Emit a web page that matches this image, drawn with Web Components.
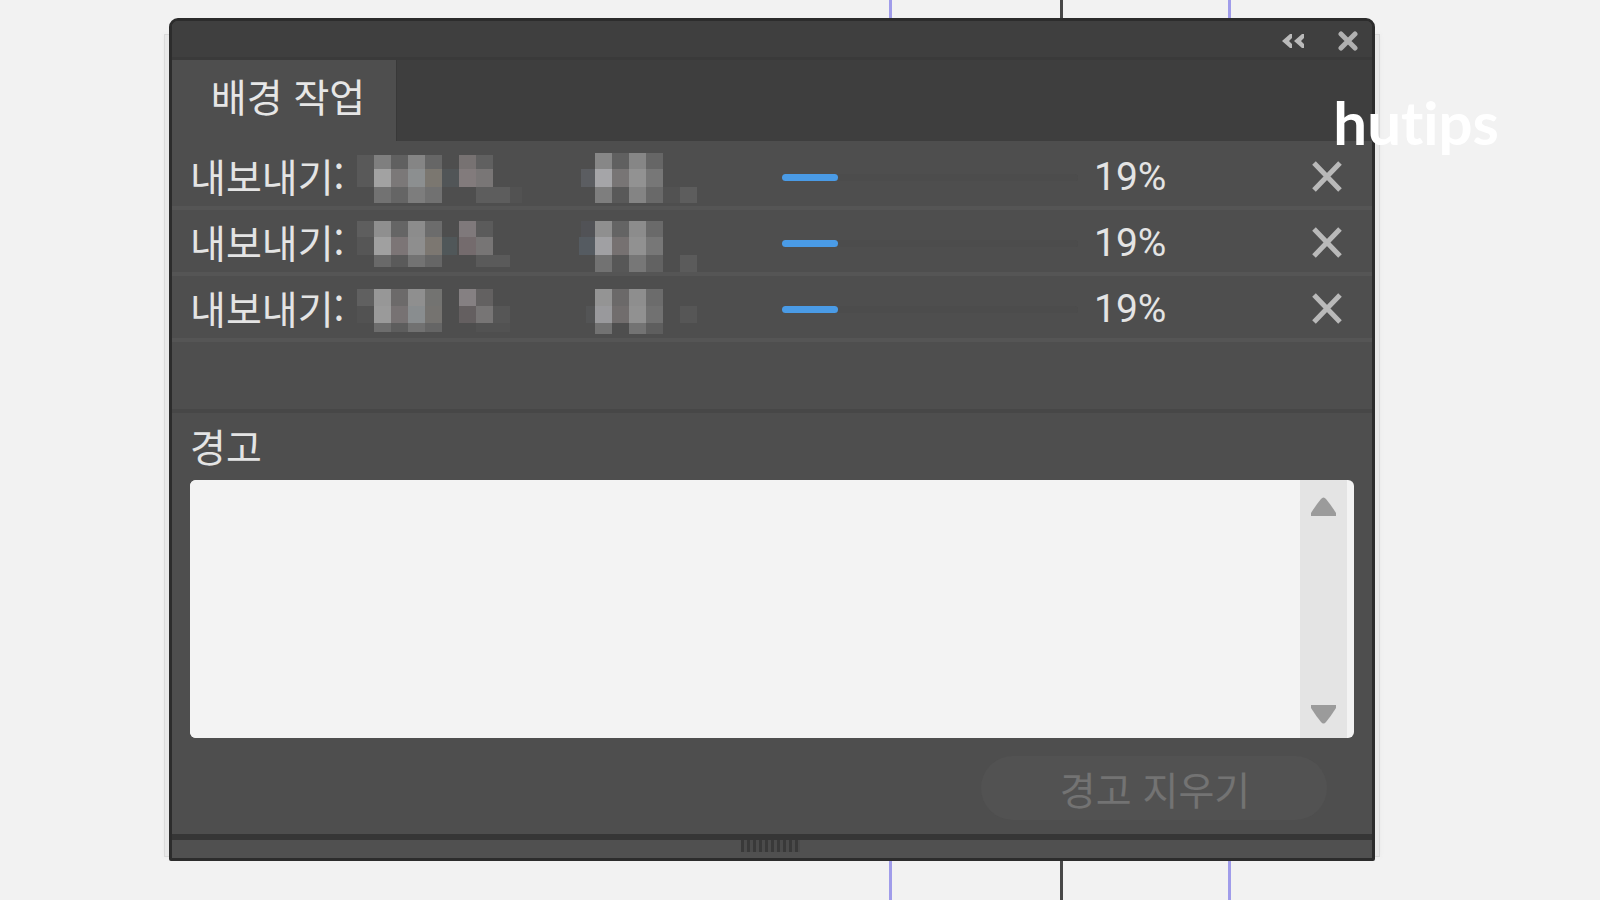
<!DOCTYPE html>
<html lang="ko">
<head>
<meta charset="utf-8">
<title>배경 작업</title>
<style>
  html, body { margin: 0; }
  body {
    background: #f2f2f2;
    font-family: "Noto Sans CJK KR", "Noto Sans", sans-serif;
    font-size: 39px;
    line-height: 56px;
    color: #e4e4e4;
  }
</style>
</head>
<body>
<canvas-page>
  <guide-lines slot="backdrop"></guide-lines>
  <task-panel>
    <span slot="tab">배경 작업</span>
    <task-row slot="tasks" value="19" mosaic="0">내보내기:</task-row>
    <task-row slot="tasks" value="19" mosaic="1">내보내기:</task-row>
    <task-row slot="tasks" value="19" mosaic="2">내보내기:</task-row>
    <warning-log slot="log">경고</warning-log>
    <pill-button slot="actions">경고 지우기</pill-button>
  </task-panel>
  <brand-mark slot="brand">hutips</brand-mark>
</canvas-page>
<script>
const define = (name, html, setup) => {
  customElements.define(name, class extends HTMLElement {
    constructor() {
      super();
      this.attachShadow({ mode: 'open' }).innerHTML = html;
    }
    connectedCallback() { if (setup) setup(this, this.shadowRoot); }
  });
};

define('canvas-page', `
  <style>
    :host { display: flex; position: relative; box-sizing: border-box; min-height: 100vh; padding: 18px 225px 39px 169px; overflow: hidden; }
    ::slotted(task-panel) { flex: 1; min-width: 0; }
  </style>
  <slot name="backdrop"></slot><slot></slot><slot name="brand"></slot>`);

define('guide-lines', `
  <style>
    :host { display: grid; position: absolute; inset: 0; grid-template-columns: 889fr 3px 168fr 3px 165fr 3px 369fr; }
    i:nth-of-type(1) { grid-column: 2; }
    i:nth-of-type(2) { grid-column: 4; }
    i:nth-of-type(3) { grid-column: 6; }
    i { background: #a09cea; }
    .axis { background: #484848; }
  </style>
  <i></i><i class="axis"></i><i></i>`);

define('brand-mark', `
  <style>
    :host { display: block; position: absolute; top: 86px; right: 101px; font: 700 60px/72px Lato, sans-serif; font-variant-ligatures: none; color: #fff; }
  </style>
  <slot></slot>`);

define('task-panel', `
  <style>
    :host { display: flex; position: relative; z-index: 0; }
    :host::before { content: ""; position: absolute; z-index: -1; inset: 16px -5px 4px; background: #e8e8e8; border: 1px solid #dadada; box-shadow: 0 0 4px #eaeaea; }
    section { flex: 1; display: flex; flex-direction: column; min-width: 0; box-sizing: border-box; border: 3px solid #2c2c2c; border-radius: 9px 9px 2px 2px; background: #4e4e4e; overflow: hidden; }
    header { display: flex; align-items: center; justify-content: flex-end; gap: 32px; box-sizing: border-box; height: 39px; padding: 4px 14px 0 0; background: #3f3f3f; border-bottom: 3px solid #3a3a3a; }
    button { display: block; padding: 0; border: 0; background: none; }
    svg { display: block; }
    nav { display: flex; background: #3e3e3e; height: 81px; }
    nav button { box-sizing: border-box; width: 225px; padding: 0 0 12px 8px; font: inherit; color: #e6e6e6; background: #4e4e4e; border-right: 1px solid #383838; }
    .tasks { padding: 3px 0 67px; border-bottom: 4px solid #474747; }
    .log { flex: 1; display: flex; padding: 0 18px; }
    ::slotted(warning-log) { flex: 1; min-width: 0; }
    .actions { display: flex; justify-content: flex-end; padding: 18px 45px 14px; }
    footer { display: flex; justify-content: center; height: 18px; padding-right: 4px; border-top: 6px solid #363636; background: #505050; }
    .grip { width: 59px; height: 12px; background: repeating-linear-gradient(90deg, #393939 0 3px, #4b4b4b 3px 6px); }
  </style>
  <section>
    <header>
      <button aria-label="접기"><svg width="24" height="18" viewBox="0 0 24 18"><path d="M10 2v4L7 9l3 3v4h-2L0 9l8-7zM22 2v4l-3 3 3 3v4h-2L12 9l8-7z" fill="#bababa"/></svg></button>
      <button aria-label="닫기"><svg width="20" height="20" viewBox="0 0 20 20"><path d="M3 3l14 14M17 3L3 17" stroke="#b0b0b0" stroke-width="5" stroke-linecap="round"/></svg></button>
    </header>
    <nav><button><slot name="tab"></slot></button></nav>
    <div class="tasks"><slot name="tasks"></slot></div>
    <div class="log"><slot name="log"></slot></div>
    <div class="actions"><slot name="actions"></slot></div>
    <footer><div class="grip"></div></footer>
  </section>`);

/* Pixelated file names: [x, y, width, height, colour] inside a 370x62 strip. */
const mosaics = [
  [[17,11,17,32,'#595959'],[34,11,17,14,'#7f7f7f'],[34,25,17,18,'#a2a2a2'],[34,43,17,16,'#727272'],[51,11,17,14,'#606060'],[51,25,17,18,'#7b7878'],[51,43,17,16,'#656565'],[68,11,17,14,'#858585'],[68,25,17,18,'#8c8f90'],[68,43,17,16,'#7d7d7d'],[85,11,17,14,'#666'],[85,25,17,18,'#7b7770'],[85,43,17,16,'#717171'],[102,25,17,18,'#515557'],
   [119,11,17,14,'#777272'],[119,25,17,18,'#827b7c'],[136,11,17,14,'#606060'],[136,25,17,18,'#797676'],[136,43,34,16,'#5d5d5d'],[170,43,12,16,'#525252'],
   [241,25,14,18,'#5b5d61'],[255,9,17,16,'#878787'],[255,25,17,18,'#a5a5a8'],[255,43,17,16,'#7e7e7e'],[272,9,17,16,'#606060'],[272,25,17,18,'#787575'],[272,43,17,16,'#595959'],[289,9,17,16,'#868686'],[289,25,17,18,'#929292'],[289,43,17,16,'#848484'],[306,9,17,16,'#666'],[306,25,17,18,'#777'],[306,43,17,16,'#696969'],[323,43,17,16,'#525252'],[340,43,17,16,'#5d5d5d']],
  [[17,11,17,16,'#5e5e5e'],[17,27,17,18,'#565656'],[34,11,17,16,'#8f8f8f'],[34,27,17,18,'#a0a0a0'],[34,45,17,12,'#696969'],[51,11,17,16,'#656565'],[51,27,17,18,'#7c7576'],[51,45,17,12,'#5a5a5a'],[68,11,17,16,'#8c8c8c'],[68,27,17,18,'#8e8e8e'],[68,45,17,12,'#737373'],[85,11,17,16,'#6c6c6c'],[85,27,17,18,'#7c7771'],[85,45,17,12,'#666'],[102,27,15,18,'#505759'],
   [119,11,17,16,'#7f797b'],[119,27,17,18,'#746b6d'],[136,11,17,16,'#5b5b5b'],[136,27,17,18,'#777575'],[136,45,34,12,'#5a5a5a'],
   [239,27,16,18,'#555b61'],[241,11,14,16,'#515256'],[255,11,17,16,'#8f8f8f'],[255,27,17,18,'#a0a0a3'],[255,45,17,17,'#727272'],[272,11,17,16,'#646464'],[272,27,17,18,'#767171'],[272,45,17,17,'#575757'],[289,11,17,16,'#8c8c8c'],[289,27,17,18,'#919191'],[289,45,17,17,'#777'],[306,11,17,16,'#6a6a6a'],[306,27,17,18,'#777'],[306,45,17,17,'#626262'],[340,45,17,17,'#5b5b5b']],
  [[17,13,17,17,'#606060'],[17,30,17,17,'#525252'],[34,13,17,17,'#979797'],[34,30,17,17,'#9a9a9a'],[34,47,17,9,'#6d6d6d'],[51,13,17,17,'#6c6a6a'],[51,30,17,17,'#777273'],[51,47,17,9,'#5d5d5d'],[68,13,17,17,'#8f8f8f'],[68,30,17,17,'#898d8f'],[68,47,17,9,'#717171'],[85,13,17,17,'#737371'],[85,30,17,17,'#757370'],[85,47,17,9,'#656565'],
   [119,13,17,17,'#858082'],[119,30,17,17,'#645f60'],[136,13,17,17,'#636161'],[136,30,17,17,'#777575'],[153,30,17,17,'#565656'],[136,47,34,9,'#525252'],
   [246,30,9,17,'#535455'],[255,13,17,17,'#949494'],[255,30,17,17,'#99999c'],[255,47,17,11,'#727272'],[272,13,17,17,'#6b6969'],[272,30,17,17,'#716d6d'],[289,13,17,17,'#8e8e8e'],[289,30,17,17,'#919191'],[289,47,17,11,'#737373'],[306,13,17,17,'#6c6c6c'],[306,30,17,17,'#717171'],[306,47,17,11,'#5e5e5e'],[340,30,17,17,'#565656']]
];

define('task-row', `
  <style>
    :host { display: grid; grid-template-columns: 150px 442px minmax(60px, 1fr) 234px 30px; align-items: center; height: 62px; padding: 0 30px 0 18px; border-bottom: 4px solid #555; }
    label { white-space: nowrap; }
    svg { display: block; }
    progress { display: block; width: 100%; height: 7px; appearance: none; -webkit-appearance: none; border: 0; border-radius: 4px; background: #4c4c4c; margin-top: 4px; }
    progress::-webkit-progress-bar { background: #4c4c4c; border-radius: 4px; }
    progress::-webkit-progress-value { background: #4a9be6; border-radius: 4px; }
    output { padding: 4px 0 0 16px; font-family: Roboto, sans-serif; }
    button { padding: 2px 0 0; border: 0; background: none; }
  </style>
  <label for="bar"><slot></slot></label>
  <svg width="370" height="62" viewBox="0 0 370 62" shape-rendering="crispEdges" aria-hidden="true"></svg>
  <progress id="bar" max="100"></progress>
  <output></output>
  <button aria-label="취소"><svg width="30" height="32" viewBox="0 0 30 32"><path d="M2 3l26 27M28 3L2 30" stroke="#b9b9b9" stroke-width="5"/></svg></button>`,
  (host, root) => {
    const value = Number(host.getAttribute('value'));
    root.querySelector('progress').value = value;
    root.querySelector('output').textContent = value + '%';
    root.querySelector('svg').innerHTML = mosaics[Number(host.getAttribute('mosaic'))]
      .map(([x, y, w, h, c]) => `<rect x="${x}" y="${y}" width="${w}" height="${h}" fill="${c}"/>`).join('');
  });

define('warning-log', `
  <style>
    :host { display: flex; flex-direction: column; }
    label { padding: 4px 0 7px; }
    .box { flex: 1; display: flex; min-height: 120px; border-radius: 6px; background: #f3f3f3; overflow: hidden; padding-right: 7px; }
    textarea { flex: 1; min-width: 0; box-sizing: border-box; border: 0; padding: 12px; background: #f3f3f3; resize: none; outline: 0; font: inherit; color: #333; overflow: hidden; }
    .bar { display: flex; flex-direction: column; justify-content: space-between; align-items: center; width: 47px; box-sizing: border-box; padding: 17px 0 14px; background: #e4e4e4; }
    button { padding: 0; border: 0; background: none; }
    svg { display: block; }
  </style>
  <label for="log"><slot></slot></label>
  <div class="box">
    <textarea id="log" readonly></textarea>
    <div class="bar">
      <button aria-label="위로"><svg width="25" height="19" viewBox="0 0 25 19"><path d="M0 19v-3Q5 8 10 2q2.500-3 5 0 5 6 10 14v3z" fill="#9b9b9b"/></svg></button>
      <button aria-label="아래로"><svg width="25" height="19" viewBox="0 0 25 19"><path d="M0 0v3q5 8 10 14 2.500 3 5 0Q20 11 25 3V0z" fill="#9b9b9b"/></svg></button>
    </div>
  </div>`);

define('pill-button', `
  <style>
    :host { display: block; }
    button { display: block; width: 346px; height: 64px; padding: 0 0 0 2px; border: 0; border-radius: 32px; background: #525252; font: inherit; color: #737373; }
  </style>
  <button disabled><slot></slot></button>`);
</script>
</body>
</html>
